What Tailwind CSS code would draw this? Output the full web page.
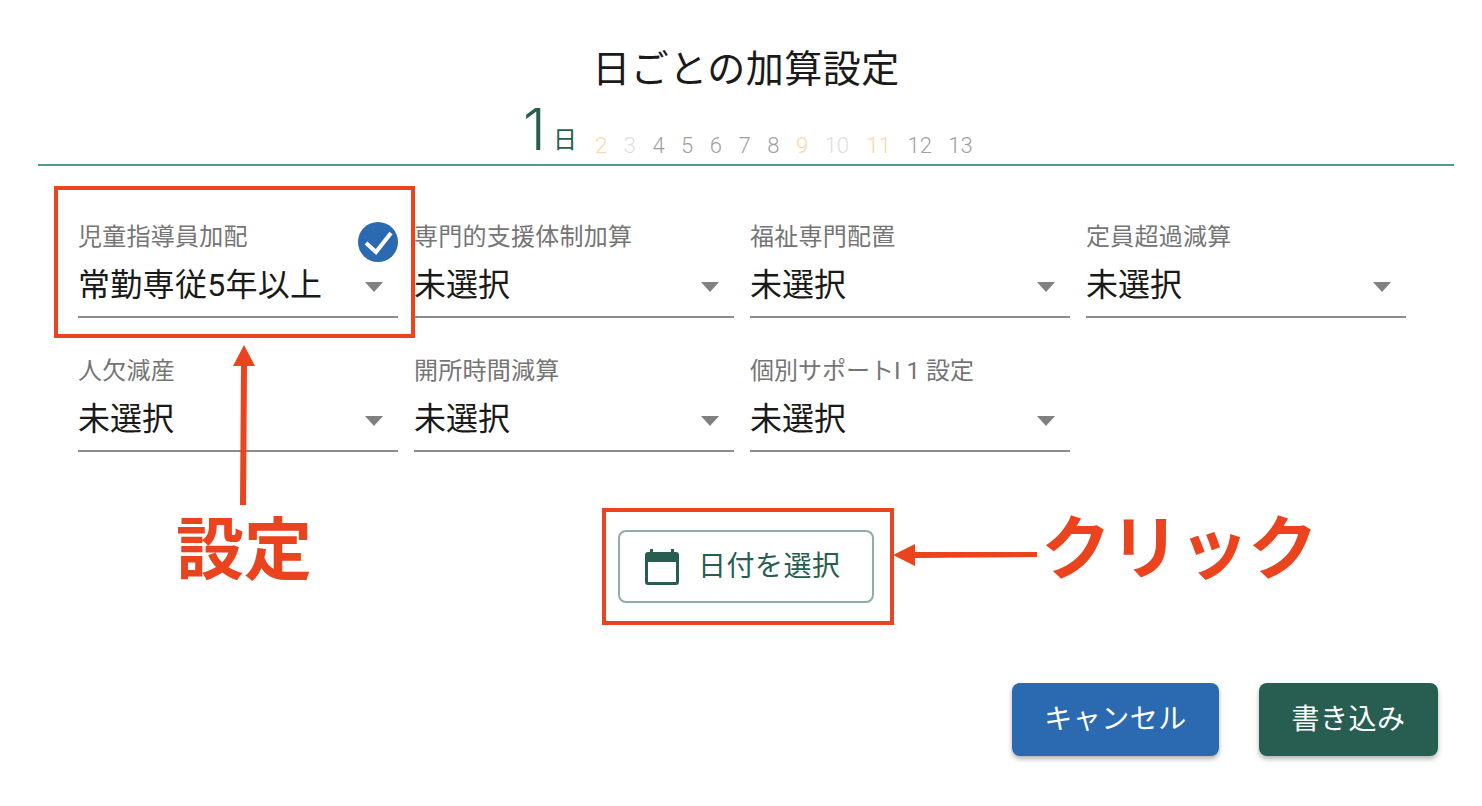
<!DOCTYPE html>
<html lang="ja">
<head>
  <meta charset="UTF-8" />
  <title>日ごとの加算設定</title>
  <script src="https://cdn.jsdelivr.net/npm/@tailwindcss/browser@4"></script>
</head>
<body class="bg-white text-[#1a1a1a] font-['Roboto','Noto_Sans_CJK_JP',sans-serif]">
  <div class="relative w-[1482px] h-[806px] overflow-hidden">

    <h1 class="pt-[42px] pl-[10px] h-[100px] text-center text-[38px] leading-[54px] font-normal tracking-[0.5px]">日ごとの加算設定</h1>

    <!-- day tabs -->
    <div class="ml-[38px] w-[1416px] h-[66px] border-b-2 border-[#4f9a8d] flex items-end gap-[18px] pb-[5px] pl-[485px]">
      <div class="flex items-end text-[#285e52]">
        <span class="w-[30px] text-[58px] leading-[60px] font-['Inter'] font-light">1</span>
        <span class="text-[24px] leading-[32px] mb-[3px]">日</span>
      </div>
      <div class="flex items-end gap-[16.5px] text-[22px] leading-[26px] font-light text-[#a0a0a0]">
        <span class="text-[#fbd7a8]">2</span>
        <span class="text-[#dedede]">3</span>
        <span>4</span>
        <span>5</span>
        <span>6</span>
        <span>7</span>
        <span>8</span>
        <span class="text-[#fbd7a8]">9</span>
        <span class="text-[#dedede]">10</span>
        <span class="text-[#fbd7a8] ml-[1px]">11</span>
        <span>12</span>
        <span>13</span>
      </div>
    </div>

    <!-- select grid -->
    <div class="ml-[78px] mt-[50px] grid grid-cols-[320px_320px_320px_320px] gap-x-[16px] gap-y-[32px] w-fit">
      <div class="h-[102px] border-b-2 border-[#8c8c8c]">
        <div class="text-[24px] leading-[42px] text-[#757575] tracking-[0.25px]">児童指導員加配</div>
        <div class="flex items-center justify-between h-[54px] pr-[15px]"><span class="text-[32px] tracking-[0.3px]">常勤専従5年以上</span><span class="mt-[4px] w-0 h-0 border-x-[9px] border-x-transparent border-t-[10px] border-t-[#808080]"></span></div>
      </div>
      <div class="h-[102px] border-b-2 border-[#8c8c8c]">
        <div class="text-[24px] leading-[42px] text-[#757575] tracking-[0.25px]">専門的支援体制加算</div>
        <div class="flex items-center justify-between h-[54px] pr-[15px]"><span class="text-[32px]">未選択</span><span class="mt-[4px] w-0 h-0 border-x-[9px] border-x-transparent border-t-[10px] border-t-[#808080]"></span></div>
      </div>
      <div class="h-[102px] border-b-2 border-[#8c8c8c]">
        <div class="text-[24px] leading-[42px] text-[#757575] tracking-[0.25px]">福祉専門配置</div>
        <div class="flex items-center justify-between h-[54px] pr-[15px]"><span class="text-[32px]">未選択</span><span class="mt-[4px] w-0 h-0 border-x-[9px] border-x-transparent border-t-[10px] border-t-[#808080]"></span></div>
      </div>
      <div class="h-[102px] border-b-2 border-[#8c8c8c]">
        <div class="text-[24px] leading-[42px] text-[#757575] tracking-[0.25px]">定員超過減算</div>
        <div class="flex items-center justify-between h-[54px] pr-[15px]"><span class="text-[32px]">未選択</span><span class="mt-[4px] w-0 h-0 border-x-[9px] border-x-transparent border-t-[10px] border-t-[#808080]"></span></div>
      </div>
      <div class="h-[102px] border-b-2 border-[#8c8c8c]">
        <div class="text-[24px] leading-[42px] text-[#757575] tracking-[0.25px]">人欠減産</div>
        <div class="flex items-center justify-between h-[54px] pr-[15px]"><span class="text-[32px]">未選択</span><span class="mt-[4px] w-0 h-0 border-x-[9px] border-x-transparent border-t-[10px] border-t-[#808080]"></span></div>
      </div>
      <div class="h-[102px] border-b-2 border-[#8c8c8c]">
        <div class="text-[24px] leading-[42px] text-[#757575] tracking-[0.25px]">開所時間減算</div>
        <div class="flex items-center justify-between h-[54px] pr-[15px]"><span class="text-[32px]">未選択</span><span class="mt-[4px] w-0 h-0 border-x-[9px] border-x-transparent border-t-[10px] border-t-[#808080]"></span></div>
      </div>
      <div class="h-[102px] border-b-2 border-[#8c8c8c]">
        <div class="text-[24px] leading-[42px] text-[#757575]">個別サポートI 1 設定</div>
        <div class="flex items-center justify-between h-[54px] pr-[15px]"><span class="text-[32px]">未選択</span><span class="mt-[4px] w-0 h-0 border-x-[9px] border-x-transparent border-t-[10px] border-t-[#808080]"></span></div>
      </div>
    </div>

    <!-- date button -->
    <div class="mt-[78px] ml-[618px]">
      <button class="w-[256px] h-[73px] border-2 border-[#8fada6] rounded-[8px] flex items-center gap-[19px] pl-[25px] text-[#285e52] text-[28px] tracking-[0.5px]">
        <svg width="34" height="36" viewBox="0 0 34 36">
          <path d="M3 3h2V0h3v3h18V0h3v3h2a3 3 0 0 1 3 3v27a3 3 0 0 1-3 3H3a3 3 0 0 1-3-3V6a3 3 0 0 1 3-3zM3 13v20h28V13z" fill="#285e52" fill-rule="evenodd"/>
        </svg>
        <span>日付を選択</span>
      </button>
    </div>

    <!-- footer buttons -->
    <div class="mt-[80px] flex justify-end gap-[40px] pr-[44px]">
      <button class="w-[207px] h-[73px] rounded-[8px] bg-[#2b6ab0] text-white text-[28px] tracking-[0.5px] shadow-[0_3px_5px_rgba(0,0,0,0.3)]">キャンセル</button>
      <button class="w-[179px] h-[73px] rounded-[8px] bg-[#285e52] text-white text-[28px] tracking-[0.5px] shadow-[0_3px_5px_rgba(0,0,0,0.3)]">書き込み</button>
    </div>

    <!-- annotations over the screenshot -->
    <div class="absolute left-[54px] top-[186px] w-[361px] h-[152px] border-[4px] border-[#ea431d]"></div>
    <div class="absolute left-[602px] top-[508px] w-[292px] h-[117px] border-[4px] border-[#ea431d]"></div>

    <svg class="absolute left-[358px] top-[222px]" width="40" height="40" viewBox="0 0 40 40">
      <circle cx="20" cy="20" r="20" fill="#2b6ab0"/>
      <path d="M8 21l10 9L33 11" fill="none" stroke="#fff" stroke-width="4"/>
    </svg>

    <svg class="absolute left-[225px] top-[340px]" width="40" height="170" viewBox="0 0 40 170">
      <path d="M19 5L8 26h8l-1 139h6l1-139h8z" fill="#ea431d"/>
    </svg>
    <svg class="absolute left-[888px] top-[540px]" width="155" height="30" viewBox="0 0 155 30">
      <path d="M5 15L27 4v8l122 0v5L27 18v8z" fill="#ea431d"/>
    </svg>

    <div class="absolute left-[176px] top-[506px] text-[68px] leading-[90px] font-bold text-[#ea431d]">設定</div>
    <div class="absolute left-[1041px] top-[505px] text-[70px] leading-[90px] font-bold text-[#ea431d] tracking-[-1px]">クリック</div>
  </div>
</body>
</html>
